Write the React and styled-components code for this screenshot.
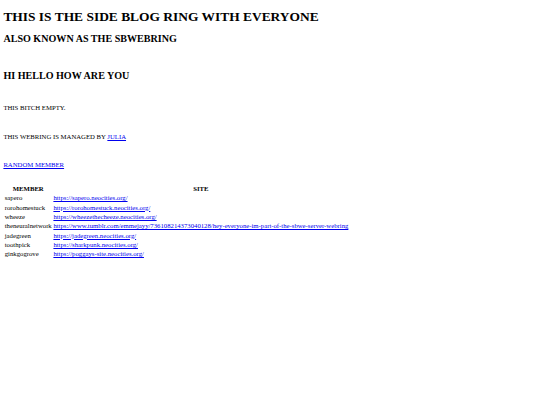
import styled, { createGlobalStyle } from "styled-components";

const GlobalStyle = createGlobalStyle`
  html, body {
    margin: 0;
    padding: 0;
    background: #ffffff;
  }
`;

const Page = styled.div`
  padding: 0 3.4px;
  font-family: "Liberation Serif", "Times New Roman", serif;
  font-size: 6.72px;
  line-height: 7.7px;
  color: #000000;
  display: flow-root;
`;

const Title = styled.h1`
  font-family: "Liberation Serif", "Times New Roman", serif;
  font-size: 13.44px;
  line-height: 15.4px;
  font-weight: bold;
  margin: 9px 0 0 0;
`;

const Heading = styled.h2`
  font-family: "Liberation Serif", "Times New Roman", serif;
  font-size: 10.08px;
  line-height: 11.6px;
  font-weight: bold;
  margin: ${(p) => p.$top}px 0 0 0;
`;

const Text = styled.p`
  margin: ${(p) => p.$top}px 0 0 0;
`;

const Link = styled.a`
  color: #0000ee;
  text-decoration: underline;
`;

const Members = styled.table`
  margin-top: 15px;
  border-collapse: separate;
  border-spacing: 1px;
  font-size: 6.72px;
  line-height: 7.65px;

  th {
    font-weight: bold;
    text-align: center;
    padding: 0.33px;
  }

  td {
    padding: 0.33px;
    text-align: left;
    white-space: nowrap;
  }
`;

const members = [
  { name: "sapero", url: "https://sapero.neocities.org/" },
  { name: "rorohomestuck", url: "https://rorohomestuck.neocities.org/" },
  { name: "wheeze", url: "https://wheezethecheeze.neocities.org/" },
  {
    name: "theneuralnetwork",
    url: "https://www.tumblr.com/emmejayy/736108214373040128/hey-everyone-im-part-of-the-sbwe-server-webring",
  },
  { name: "jadegreen", url: "https://jadegreen.neocities.org/" },
  { name: "toothpick", url: "https://sharkpunk.neocities.org/" },
  { name: "ginkgogrove", url: "https://poggays-site.neocities.org/" },
];

const App = () => (
  <Page>
    <GlobalStyle />
    <Title>THIS IS THE SIDE BLOG RING WITH EVERYONE</Title>
    <Heading $top={9}>ALSO KNOWN AS THE SBWEBRING</Heading>
    <Heading $top={24.6}>HI HELLO HOW ARE YOU</Heading>
    <Text $top={22.8}>THIS BITCH EMPTY.</Text>
    <Text $top={21.2}>
      THIS WEBRING IS MANAGED BY <Link href="#">JULIA</Link>
    </Text>
    <Text $top={20.5}>
      <Link href="#">RANDOM MEMBER</Link>
    </Text>
    <Members>
      <thead>
        <tr>
          <th>MEMBER</th>
          <th>SITE</th>
        </tr>
      </thead>
      <tbody>
        {members.map((m) => (
          <tr key={m.name}>
            <td>{m.name}</td>
            <td>
              <Link href={m.url}>{m.url}</Link>
            </td>
          </tr>
        ))}
      </tbody>
    </Members>
  </Page>
);

export default App;
